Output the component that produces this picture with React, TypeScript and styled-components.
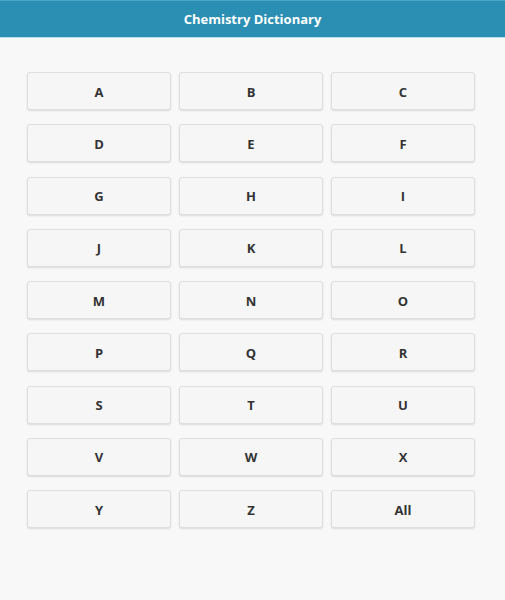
import styled, { createGlobalStyle } from 'styled-components'

const GlobalStyle = createGlobalStyle`
  html, body {
    margin: 0;
    padding: 0;
    background: #f8f8f8;
    font-family: "Open Sans", "Noto Sans", sans-serif;
  }
`

const Page = styled.div`
  min-height: 600px;
  background: #f8f8f8;
`

const Header = styled.header`
  height: 38px;
  background: #2a8fb3;
  border-top: 1px solid #48a6c6;
  border-bottom: 1px solid #b9dfee;
  box-sizing: border-box;
  display: flex;
  align-items: center;
  justify-content: center;
`

const Title = styled.h1`
  margin: 0;
  font-size: 13px;
  font-weight: 700;
  color: #fff;
`

const Grid = styled.div`
  display: grid;
  grid-template-columns: repeat(3, 1fr);
  column-gap: 8px;
  row-gap: 14.25px;
  width: 448px;
  margin: 0 0 0 27px;
  padding-top: 34px;
`

const LetterButton = styled.button`
  height: 38px;
  background: #f6f6f6;
  border: 1px solid #dedede;
  border-radius: 3px;
  box-shadow: 0 1px 2px rgba(0, 0, 0, 0.12);
  font-family: "Open Sans", "Noto Sans", sans-serif;
  font-size: 13px;
  font-weight: 700;
  color: #333;
  cursor: pointer;
  padding: 1px 0 0;
`

const letters = 'ABCDEFGHIJKLMNOPQRSTUVWXYZ'.split('').concat('All')

export default function App() {
  return (
    <Page>
      <GlobalStyle />
      <Header>
        <Title>Chemistry Dictionary</Title>
      </Header>
      <Grid>
        {letters.map(l => (
          <LetterButton key={l}>{l}</LetterButton>
        ))}
      </Grid>
    </Page>
  )
}
